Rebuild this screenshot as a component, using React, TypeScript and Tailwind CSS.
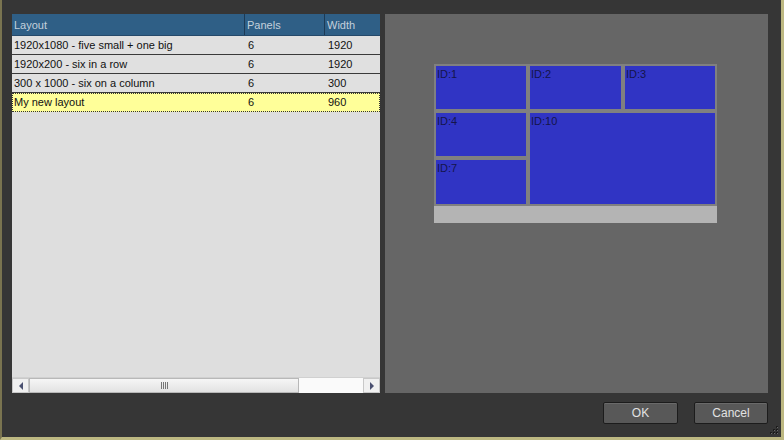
const rows = [
  { name: '1920x1080 - five small + one big', panels: '6', width: '1920' },
  { name: '1920x200 - six in a row', panels: '6', width: '1920' },
  { name: '300 x 1000 - six on a column', panels: '6', width: '300' },
  { name: 'My new layout', panels: '6', width: '960', selected: true },
]

function Cell({ id, className }: { id: string; className: string }) {
  return (
    <div className={`bg-[#3034c4] text-[11px] leading-[12px] text-[#15154a] pl-[1px] pt-[2px] ${className}`}>
      {id}
    </div>
  )
}

export default function App() {
  return (
    <div
      className="w-[784px] h-[440px] bg-[#363636] border-l-2 border-r-[3px] border-b-[3px] border-l-[#7a7450] border-r-[#bdb882] border-b-[#bdb882] flex flex-col"
      style={{ fontFamily: '"Liberation Sans", Arial, sans-serif' }}
    >
      <div className="flex gap-[5px] pl-[10px] pt-[14px]">
        {/* list */}
        <div className="w-[368px] h-[379px] bg-[#dedede] flex flex-col">
          <div className="flex h-[22px] bg-[#2f5f86] text-[11px] text-[#c4d0dc] border-b border-[#25496a]">
            <div className="w-[233px] pl-[2px] pt-[3px] border-r border-[#1d3a55]">Layout</div>
            <div className="w-[80px] pl-[2px] pt-[3px] border-r border-[#1d3a55]">Panels</div>
            <div className="flex-1 pl-[2px] pt-[3px]">Width</div>
          </div>
          <div className="flex-1 text-[11px] text-[#111]">
            {rows.map((r) => (
              <div
                key={r.name}
                className={`flex h-[19px] items-center ${
                  r.selected
                    ? 'bg-[#ffff99] border border-dotted border-[#333]'
                    : 'bg-[#e0e0e0] border-b border-[#3a3a3a]'
                }`}
              >
                <div className={r.selected ? 'w-[233px] pl-[1px]' : 'w-[234px] pl-[2px]'}>{r.name}</div>
                <div className="w-[80px] pl-[2px]">{r.panels}</div>
                <div className="flex-1 pl-[2px]">{r.width}</div>
              </div>
            ))}
          </div>
          {/* scrollbar */}
          <div className="h-[16px] flex bg-[#fafafa] border-t border-[#d0d0d0]">
            <div className="w-[17px] flex items-center justify-center bg-[#f0f0f0] border border-[#c8c8c8]">
              <div className="w-0 h-0 border-y-[4px] border-y-transparent border-r-[4px] border-r-[#4a5070]" />
            </div>
            <div className="w-[270px] flex items-center justify-center bg-gradient-to-b from-[#f6f6f6] to-[#e2e2e2] border border-[#b8b8b8]">
              <div className="flex gap-[1px]">
                <div className="w-px h-[7px] bg-[#777]" />
                <div className="w-px h-[7px] bg-[#777]" />
                <div className="w-px h-[7px] bg-[#777]" />
                <div className="w-px h-[7px] bg-[#777]" />
              </div>
            </div>
            <div className="flex-1" />
            <div className="w-[17px] flex items-center justify-center bg-[#f0f0f0] border border-[#c8c8c8]">
              <div className="w-0 h-0 border-y-[4px] border-y-transparent border-l-[4px] border-l-[#4a5070]" />
            </div>
          </div>
        </div>

        {/* preview */}
        <div className="w-[383px] h-[379px] bg-[#666666] pt-[50px] pl-[49px]">
          <div className="w-[283px] bg-[#808080] flex flex-col">
            <div className="p-[2px] flex flex-col gap-[4px]">
              <div className="flex gap-[4px] h-[43px]">
                <Cell id="ID:1" className="w-[90px]" />
                <Cell id="ID:2" className="w-[91px]" />
                <Cell id="ID:3" className="w-[90px]" />
              </div>
              <div className="flex gap-[4px] h-[91px]">
                <div className="flex flex-col gap-[4px] w-[90px]">
                  <Cell id="ID:4" className="h-[43px]" />
                  <Cell id="ID:7" className="h-[44px]" />
                </div>
                <Cell id="ID:10" className="w-[185px]" />
              </div>
            </div>
            <div className="h-[17px] bg-[#b4b4b4]" />
          </div>
        </div>
      </div>

      <div className="flex justify-end gap-[16px] pr-[13px] pt-[9px] relative">
        <button className="w-[75px] h-[22px] bg-[#585858] border border-[#1c1c1c] rounded-[2px] text-[12px] text-[#e2e2e2] shadow-[inset_0_1px_0_#6a6a6a]">
          OK
        </button>
        <button className="w-[74px] h-[22px] bg-[#585858] border border-[#1c1c1c] rounded-[2px] text-[12px] text-[#e2e2e2] shadow-[inset_0_1px_0_#6a6a6a]">
          Cancel
        </button>
        <svg className="absolute right-[1px] bottom-[-14px]" width="14" height="14" viewBox="0 0 14 14">
          <g fill="#1c1c1c">
            <rect x="10" y="2" width="2" height="2" />
            <rect x="7" y="5" width="2" height="2" />
            <rect x="10" y="5" width="2" height="2" />
            <rect x="4" y="8" width="2" height="2" />
            <rect x="7" y="8" width="2" height="2" />
            <rect x="10" y="8" width="2" height="2" />
          </g>
          <g fill="#6a6a6a">
            <rect x="11" y="3" width="1" height="1" />
            <rect x="8" y="6" width="1" height="1" />
            <rect x="11" y="6" width="1" height="1" />
            <rect x="5" y="9" width="1" height="1" />
            <rect x="8" y="9" width="1" height="1" />
            <rect x="11" y="9" width="1" height="1" />
          </g>
        </svg>
      </div>
    </div>
  )
}
